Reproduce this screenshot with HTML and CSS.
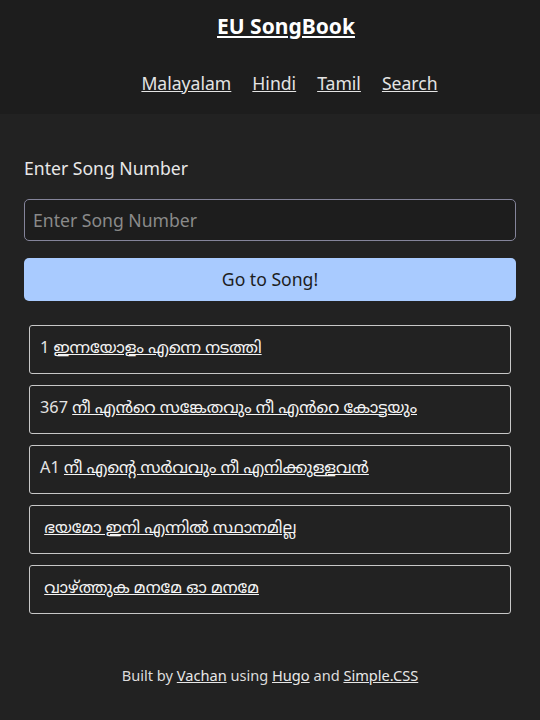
FILE: index.html
```html
<!DOCTYPE html>
<html lang="ml">
<head>
<meta charset="utf-8">
<title>EU SongBook</title>
<link rel="stylesheet" href="styles.css">
</head>
<body>
<header class="site-header">
  <h1 class="site-title"><a href="#">EU SongBook</a></h1>
  <nav class="site-nav">
    <a href="#">Malayalam</a>
    <a href="#">Hindi</a>
    <a href="#">Tamil</a>
    <a href="#">Search</a>
  </nav>
</header>
<main class="content">
  <form class="song-form">
    <label class="song-label" for="num">Enter Song Number</label>
    <input class="song-input" id="num" type="text" placeholder="Enter Song Number">
    <button class="song-button" type="button">Go to Song!</button>
  </form>
  <ul class="song-list">
    <li class="song-card"><span>1 <a href="#">ഇന്നയോളം എന്നെ നടത്തി</a></span></li>
    <li class="song-card"><span>367 <a href="#">നീ എൻറെ സങ്കേതവും നീ എൻറെ കോട്ടയും</a></span></li>
    <li class="song-card"><span>A1 <a href="#">നീ എന്റെ സർവവും നീ എനിക്കുള്ളവൻ</a></span></li>
    <li class="song-card"><span>&nbsp;<a href="#">ഭയമോ ഇനി എന്നിൽ സ്ഥാനമില്ല</a></span></li>
    <li class="song-card"><span>&nbsp;<a href="#">വാഴ്ത്തുക മനമേ ഓ മനമേ</a></span></li>
  </ul>
</main>
<footer class="site-footer">
  Built by <a href="#">Vachan</a> using <a href="#">Hugo</a> and <a href="#">Simple.CSS</a>
</footer>
</body>
</html>
```
FILE: styles.css
```css
* { box-sizing: border-box; }
html, body {
  margin: 0;
  padding: 0;
  background: #222222;
  color: #dcdcdc;
  font-family: "Noto Sans", "Noto Sans Malayalam", sans-serif;
}
a { color: #f0f0f0; }
.site-header {
  background: #1d1d1d;
  height: 114px;
  display: flex;
  flex-direction: column;
  align-items: center;
  padding: 10px 0 0 32px;
}
.site-title {
  margin: 0;
  font-size: 21px;
  font-weight: 700;
  line-height: 32px;
}
.site-title a { color: #ffffff; }
.site-nav {
  margin-top: 28px;
  padding-left: 7px;
  display: flex;
  gap: 21px;
  font-size: 17.6px;
  line-height: 26px;
}
.site-nav a { color: #e4e4e4; }
.content {
  padding: 42px 24px 0;
}
.song-form {
  display: flex;
  flex-direction: column;
}
.song-label {
  font-size: 17.6px;
  line-height: 24px;
  color: #e8e8e8;
}
.song-input {
  margin-top: 19px;
  height: 42px;
  background: #1d1d1d;
  border: 1px solid #84849a;
  border-radius: 5px;
  color: #dcdcdc;
  font: inherit;
  font-size: 17.6px;
  padding: 0 8px;
}
.song-input::placeholder { color: #8a8a8a; }
.song-button {
  margin-top: 17px;
  height: 43px;
  padding-bottom: 2px;
  background: #a9cbff;
  border: none;
  border-radius: 5px;
  color: #1d1d1d;
  font: inherit;
  font-size: 17.6px;
}
.song-list {
  list-style: none;
  margin: 24px 5px 0;
  padding: 0;
  display: flex;
  flex-direction: column;
  gap: 11px;
}
.song-card {
  height: 49px;
  border: 1px solid #c8c8c8;
  border-radius: 3px;
  padding: 0 0 5px 10px;
  display: flex;
  align-items: center;
  font-size: 16.3px;
  color: #e4e4e4;
}
.song-card a { color: #f4f4f4; }
.site-footer {
  text-align: center;
  font-size: 14.6px;
  margin-top: 51px;
  color: #dcdcdc;
}
.site-footer a { color: #e8e8e8; }
```
